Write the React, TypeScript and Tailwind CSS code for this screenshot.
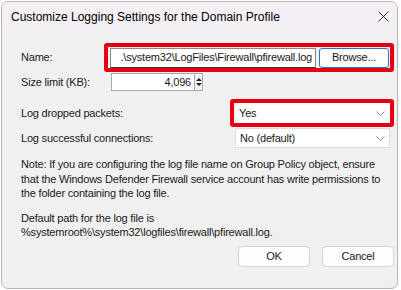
import React from "react";

const font = { fontFamily: '"Liberation Sans", Arial, sans-serif' };

function Chevron() {
  return (
    <svg width="9" height="5" viewBox="0 0 9 5" className="shrink-0">
      <path d="M0.5 0.5 L4.5 4.5 L8.5 0.5" fill="none" stroke="#8a8a8a" strokeWidth="1" />
    </svg>
  );
}

export default function App() {
  return (
    <div className="w-[401px] h-[290px] bg-white" style={font}>
      <div className="w-[397px] h-[288px] ml-[1px] mt-[1px] rounded-[7px] border border-[#b9b3b9] bg-[#f0f0f0] overflow-hidden flex flex-col text-[11px] tracking-[-0.2px] text-[#1a1a1a]">
        <div className="h-[29px] bg-[#f4eff4] flex items-center justify-between pl-[9px] pr-[8px] shrink-0 tracking-normal">
          <span className="text-[12px] text-black">Customize Logging Settings for the Domain Profile</span>
          <svg width="11" height="11" viewBox="0 0 11 11">
            <path d="M0.5 0.5 L10.5 10.5 M10.5 0.5 L0.5 10.5" stroke="#333" strokeWidth="1" />
          </svg>
        </div>
        <div className="flex flex-col pl-[19px] pr-[3px]">
          <div className="flex items-center h-[29px] mt-[12px]">
            <span className="w-[84px]">Name:</span>
            <div className="flex items-center gap-[3px] border-[4px] border-[#e3000f] rounded-[3px] pl-[2px] pr-[1px] h-[29px] w-[290px]">
              <div className="h-[20px] w-[206px] bg-white border border-[#8a8a8a] border-b-[#333] flex items-center justify-end pr-[3px] overflow-hidden whitespace-nowrap">
                .\system32\LogFiles\Firewall\pfirewall.log
              </div>
              <div className="h-[20px] w-[70px] rounded-[3px] border-[1.5px] border-[#2a74c8] bg-[#fdfdfd] flex items-center justify-center">
                Browse...
              </div>
            </div>
          </div>
          <div className="flex items-center h-[18px] mt-[1px]">
            <span className="w-[90px]">Size limit (KB):</span>
            <div className="h-[18px] w-[84px] bg-white border border-[#a8a8a8] flex items-center justify-end pr-[3px]">4,096</div>
            <div className="h-[18px] w-[8px] border border-l-0 border-[#a8a8a8] bg-[#f0f0f0] flex flex-col items-center justify-center">
              <svg width="6" height="10" viewBox="0 0 6 10">
                <path d="M3 1 L6 4 L0 4 Z M0 6 L6 6 L3 9 Z" fill="#222" />
              </svg>
            </div>
          </div>
          <div className="flex items-center justify-between h-[28px] mt-[8px]">
            <span>Log dropped packets:</span>
            <div className="border-[4px] border-[#e3000f] rounded-[3px] pl-[2px] pr-[0px] h-[28px] w-[164px] flex items-center">
              <div className="h-[20px] w-full bg-white flex items-center justify-between pl-[3px] pr-[5px]">
                <span>Yes</span>
                <Chevron />
              </div>
            </div>
          </div>
          <div className="flex items-center justify-between h-[20px] mt-[1px]">
            <span>Log successful connections:</span>
            <div className="h-[20px] w-[155px] mr-[4px] bg-white border border-[#dcdcdc] flex items-center justify-between pl-[4px] pr-[4px]">
              <span>No (default)</span>
              <Chevron />
            </div>
          </div>
          <p className="mt-[9px] leading-[14.5px] whitespace-nowrap">
            Note: If you are configuring the log file name on Group Policy object, ensure
            <br />
            that the Windows Defender Firewall service account has write permissions to
            <br />
            the folder containing the log file.
          </p>
          <p className="mt-[10px] leading-[14.5px] whitespace-nowrap">
            Default path for the log file is
            <br />
            %systemroot%\system32\logfiles\firewall\pfirewall.log.
          </p>
          <div className="flex justify-end gap-[12px] mt-[6px] pr-[0px]">
            <div className="h-[21px] w-[72px] rounded-[4px] border border-[#d4d4d4] bg-[#fdfdfd] flex items-center justify-center">OK</div>
            <div className="h-[21px] w-[72px] rounded-[4px] border border-[#d4d4d4] bg-[#fdfdfd] flex items-center justify-center">Cancel</div>
          </div>
        </div>
      </div>
    </div>
  );
}
